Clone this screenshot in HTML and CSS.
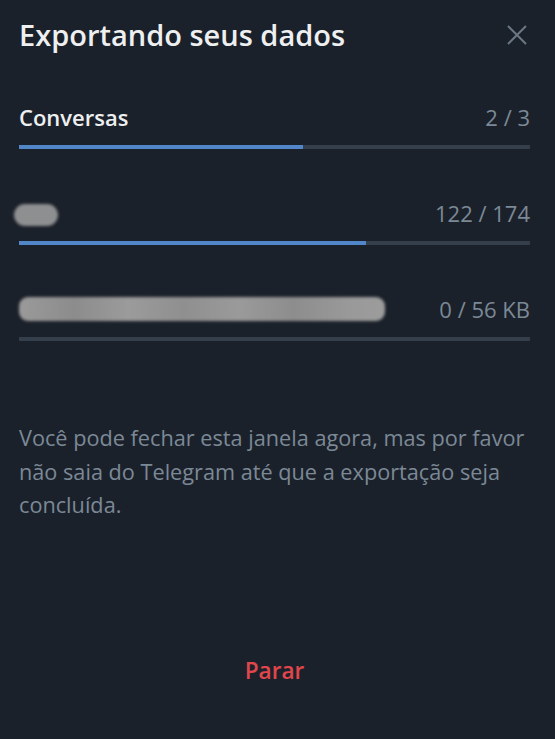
FILE: index.html
```html
<!DOCTYPE html>
<html lang="pt">
<head>
<meta charset="utf-8">
<link rel="stylesheet" href="styles.css">
</head>
<body>
<div class="dialog">
  <header class="head">
    <h1 class="title">Exportando seus dados</h1>
    <button class="close" aria-label="Fechar">
      <svg width="20" height="20" viewBox="0 0 20 20"><path d="M1 1L19 19M19 1L1 19" stroke="#6b7784" stroke-width="2" fill="none"/></svg>
    </button>
  </header>

  <section class="rows">
    <div class="row">
      <div class="row-top">
        <span class="label">Conversas</span>
        <span class="count">2 / 3</span>
      </div>
      <div class="track"><div class="fill" style="width:55.6%"></div></div>
    </div>
    <div class="row">
      <div class="row-top">
        <span class="hidden-name short"></span>
        <span class="count">122 / 174</span>
      </div>
      <div class="track"><div class="fill" style="width:68%"></div></div>
    </div>
    <div class="row">
      <div class="row-top">
        <span class="hidden-name long"></span>
        <span class="count">0 / 56 KB</span>
      </div>
      <div class="track"><div class="fill" style="width:0%"></div></div>
    </div>
  </section>

  <p class="note">Você pode fechar esta janela agora, mas por favor<br>não saia do Telegram até que a exportação seja<br>concluída.</p>

  <footer class="foot">
    <button class="stop">Parar</button>
  </footer>
</div>
</body>
</html>
```

FILE: styles.css
```css
html, body {
  margin: 0;
  padding: 0;
  background: #1b212a;
}

body {
  font-family: "Open Sans", "Noto Sans", sans-serif;
  width: 555px;
  height: 739px;
  overflow: hidden;
}

.dialog {
  padding: 0 25px 0 19px;
  display: flex;
  flex-direction: column;
  height: 739px;
  box-sizing: border-box;
}

.head {
  display: flex;
  align-items: center;
  justify-content: space-between;
  padding-top: 15px;
  height: 40px;
}

.title {
  margin: 0;
  font-size: 29px;
  line-height: 40px;
  font-weight: 600;
  color: #eeeff0;
}

.close {
  background: none;
  border: 0;
  padding: 0;
  margin-right: 3px;
  width: 20px;
  height: 20px;
  display: flex;
}

.rows {
  margin-top: 49px;
  display: flex;
  flex-direction: column;
}

.row {
  height: 96px;
  display: flex;
  flex-direction: column;
}

.row-top {
  display: flex;
  justify-content: space-between;
  align-items: center;
  height: 26px;
  line-height: 26px;
}

.label {
  color: #eeeff0;
  font-size: 22px;
  font-weight: 600;
}

.count {
  color: #7b8997;
  font-size: 22px;
}

.track {
  margin-top: 15px;
  height: 4px;
  background: #353f4b;
  overflow: hidden;
}

.fill {
  height: 100%;
  background: #5186c8;
}

.hidden-name {
  display: block;
  background: #8e8f91;
  filter: blur(1.5px);
}

.hidden-name.short {
  width: 44px;
  height: 22px;
  border-radius: 11px;
  margin-left: -5px;
  margin-top: 4px;
}

.hidden-name.long {
  width: 366px;
  height: 24px;
  border-radius: 9px;
  background: linear-gradient(90deg, #9a9a9a, #8c8c8c 15%, #9b9b9b 30%, #8f8f8f 45%, #9a9a9a 60%, #8d8d8d 75%, #999 90%, #9c9c9c);
}

.note {
  margin: 29px 0 0;
  color: #7b8997;
  font-size: 21.7px;
  line-height: 33.5px;
  white-space: nowrap;
}

.foot {
  margin-top: auto;
  padding-bottom: 53px;
  display: flex;
  justify-content: center;
}

.stop {
  background: none;
  border: 0;
  font-family: inherit;
  font-size: 22.6px;
  line-height: 30px;
  font-weight: 600;
  color: #e0464b;
  padding: 0;
  margin-left: 0;
}
```
